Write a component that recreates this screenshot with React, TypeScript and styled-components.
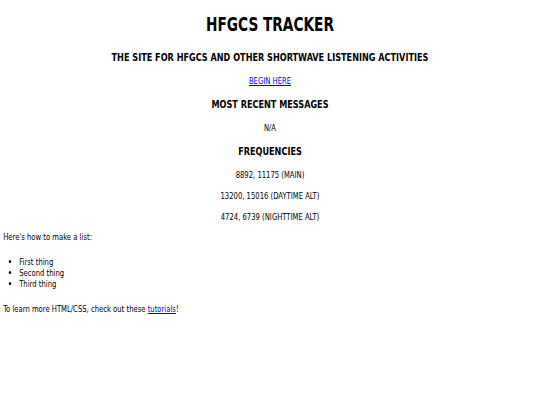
import React from "react"
import styled, { createGlobalStyle } from "styled-components"

// the reference is squeezed sideways, so the whole page is laid out wider and scaled back
const SQUEEZE = 0.8

const GlobalStyle = createGlobalStyle`
  body {
    margin: 0;
    font-family: "DejaVu Sans Condensed", "DejaVu Sans", sans-serif;
    font-stretch: condensed;
    font-size: 9.5px;
    line-height: 11px;
    color: #000;
    background: #fff;
  }
`

const Page = styled.div`
  width: calc(100vw / ${SQUEEZE});
  box-sizing: border-box;
  padding: 0 4px;
  transform: scaleX(${SQUEEZE});
  transform-origin: 0 0;
  display: flow-root;
`

const Title = styled.h1`
  text-align: center;
  font-size: 19px;
  line-height: 23px;
  margin: 12.7px 0 15px;
`

const Heading = styled.h3`
  text-align: center;
  font-size: 11.3px;
  line-height: 13px;
  margin: 11.5px 0;
`

const Para = styled.p<{ $center?: boolean }>`
  margin: 9.7px 0;
  text-align: ${p => (p.$center ? "center" : "left")};
`

const Link = styled.a`
  color: #0000ee;
  text-decoration: underline;
`

const List = styled.ul`
  margin: 14px 0 13.5px;
  padding-left: 20px;
`

const Item = styled.li`
  list-style: disc;
`

const frequencies = [
  "8892, 11175 (MAIN)",
  "13200, 15016 (DAYTIME ALT)",
  "4724, 6739 (NIGHTTIME ALT)",
]

export default function App() {
  return (
    <Page>
      <GlobalStyle />
      <Title>HFGCS TRACKER</Title>
      <Heading>THE SITE FOR HFGCS AND OTHER SHORTWAVE LISTENING ACTIVITIES</Heading>
      <Para $center>
        <Link href="#">BEGIN HERE</Link>
      </Para>
      <Heading>MOST RECENT MESSAGES</Heading>
      <Para $center>N/A</Para>
      <Heading>FREQUENCIES</Heading>
      {frequencies.map(f => (
        <Para $center key={f}>{f}</Para>
      ))}
      <Para>Here's how to make a list:</Para>
      <List>
        <Item>First thing</Item>
        <Item>Second thing</Item>
        <Item>Third thing</Item>
      </List>
      <Para>
        To learn more HTML/CSS, check out these <Link href="#">tutorials</Link>!
      </Para>
    </Page>
  )
}
